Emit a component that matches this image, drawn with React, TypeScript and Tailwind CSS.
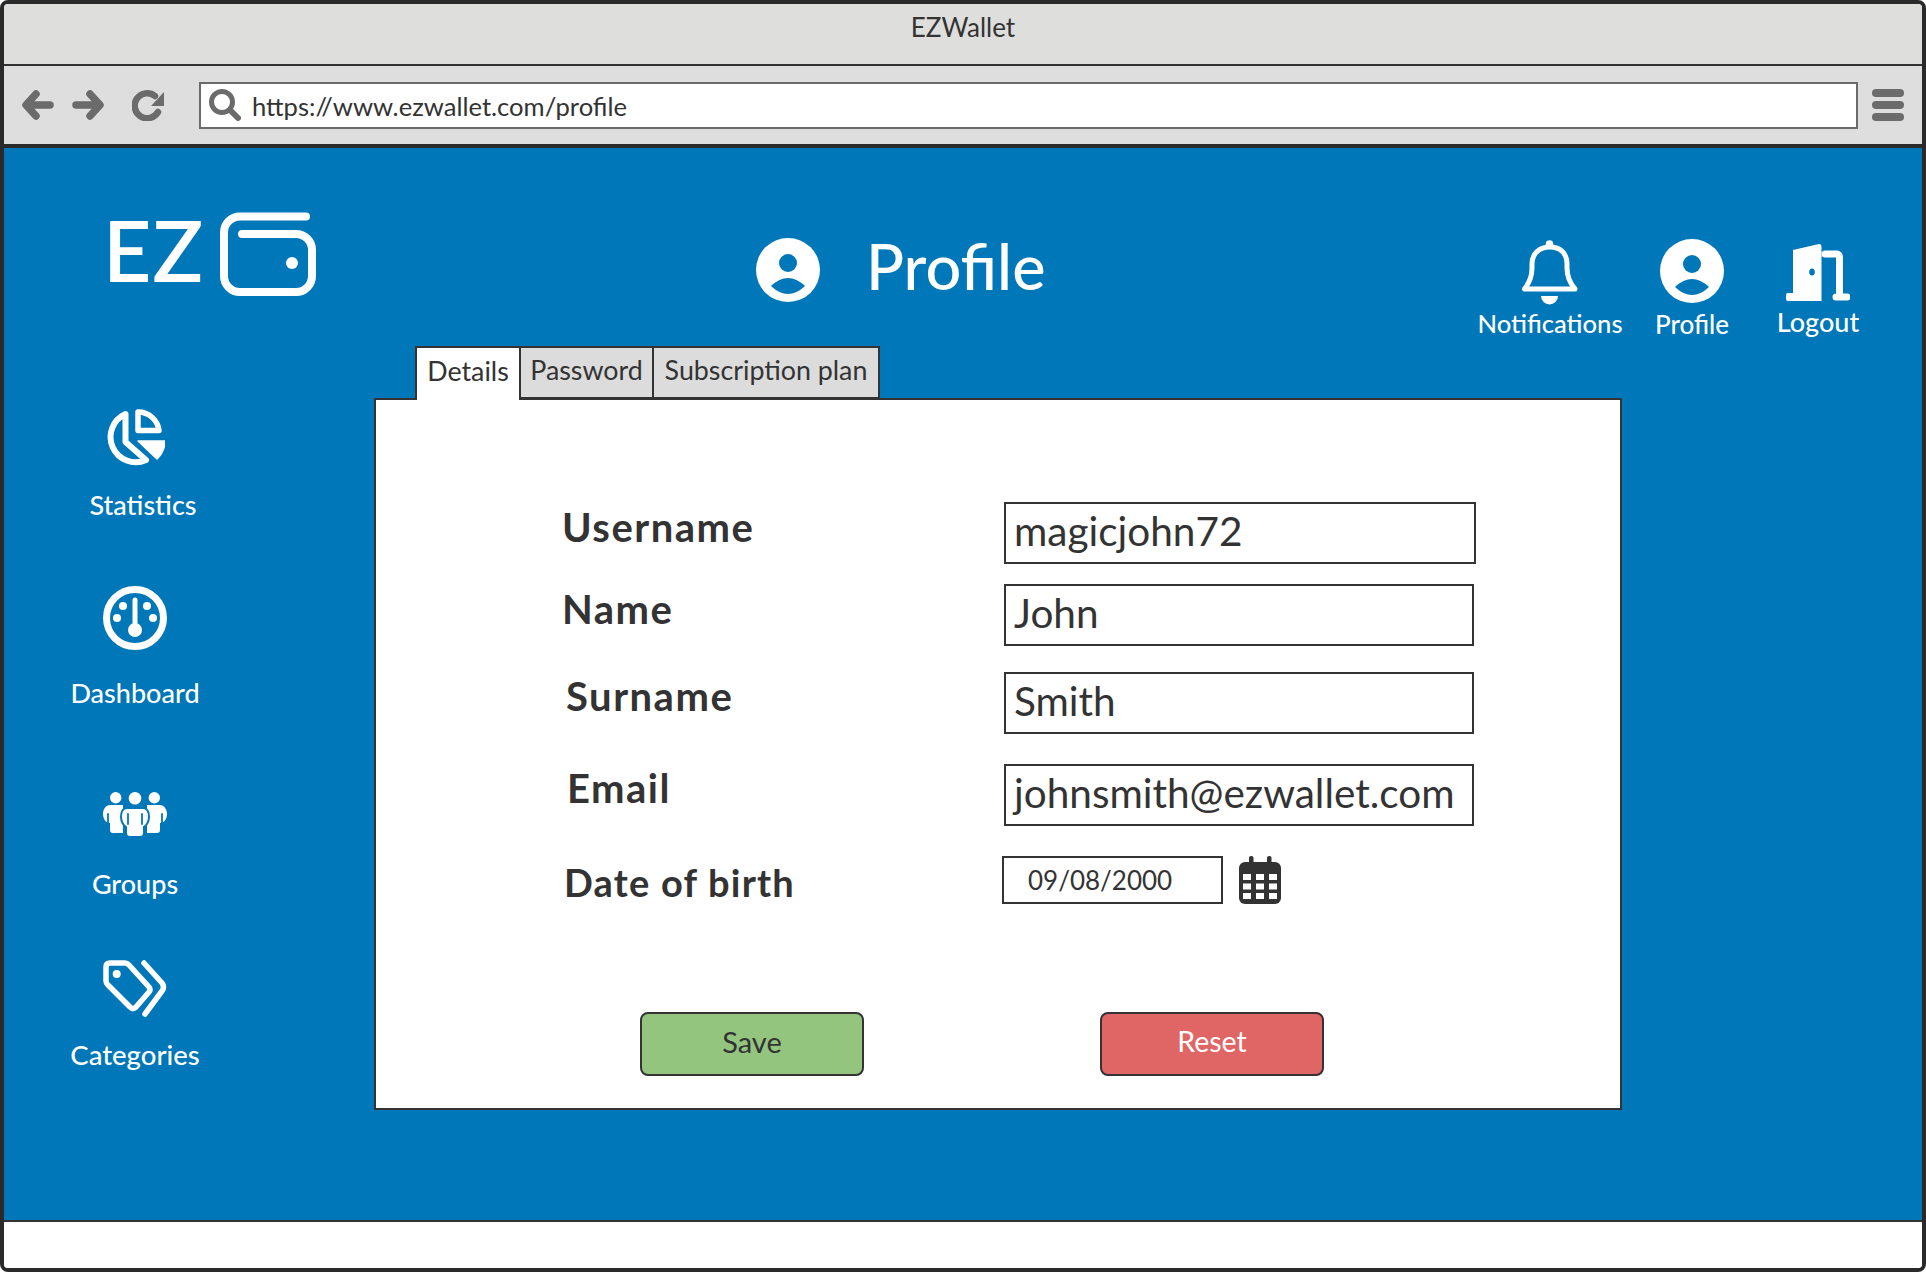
const BLUE = "#0077b8";

function ProfileIcon() {
  return (
    <svg width="64" height="64" viewBox="0 0 64 64" className="block">
      <circle cx="32" cy="32" r="32" fill="#fff" />
      <circle cx="32" cy="25" r="9" fill={BLUE} />
      <path d="M15 48 Q32 32 49 48 Q32 64 15 48Z" fill={BLUE} />
    </svg>
  );
}

function Bell() {
  return (
    <svg width="56" height="65" viewBox="0 0 56 65" className="block">
      <path d="M2.5 49 H53 C47 42 45 36 45 28 V24 C45 13 38 7 28 7 C18 7 10 13 10 24 V28 C10 36 8 42 2.5 49Z" fill="none" stroke="#fff" strokeWidth="5" strokeLinejoin="round" />
      <circle cx="27.5" cy="4" r="3.8" fill="#fff" />
      <path d="M19 56 H36 A8.5 8.5 0 0 1 19 56Z" fill="#fff" />
    </svg>
  );
}

function Door() {
  return (
    <svg width="64" height="57" viewBox="0 0 64 57" className="block">
      <path d="M7 6 L33 0 Q35.5 0 35.5 3 V57 H2 Q0 57 0 55 V51 Q0 49 2 49 H7Z" fill="#fff" />
      <ellipse cx="26" cy="28" rx="2.8" ry="3.5" fill={BLUE} />
      <path d="M39 10 H50 Q53.5 10 53.5 14 V53 M50 53 H61" fill="none" stroke="#fff" strokeWidth="7" strokeLinecap="round" />
    </svg>
  );
}

function Wallet() {
  return (
    <svg width="96" height="84" viewBox="0 0 96 84" className="block">
      <path d="M86 4.5 H20 A16 16 0 0 0 4 20.5 V64 A16 16 0 0 0 20 80 H76 A16 16 0 0 0 92 64 V38 A16 16 0 0 0 76 22 H22" fill="none" stroke="#fff" strokeWidth="8" strokeLinecap="round" />
      <circle cx="72" cy="51" r="6" fill="#fff" />
    </svg>
  );
}

function PieIcon() {
  return (
    <svg width="60" height="58" viewBox="0 0 60 58" className="block">
      <path d="M20.5 5 V33 L41 51 A25 25 0 1 1 20.5 5Z" fill="none" stroke="#fff" strokeWidth="6" strokeLinejoin="round" />
      <path d="M33 3 V21.5 H54 A21 21 0 0 0 33 3Z" fill="none" stroke="#fff" strokeWidth="5.5" strokeLinejoin="round" />
      <path d="M33 32 H60 Q60 42 52 50Z" fill="#fff" stroke="#fff" strokeWidth="1.5" strokeLinejoin="round" />
    </svg>
  );
}

function Gauge() {
  return (
    <svg width="64" height="64" viewBox="0 0 64 64" className="block">
      <circle cx="32" cy="32" r="28.5" fill="none" stroke="#fff" strokeWidth="7" />
      <path d="M32 14 V44" stroke="#fff" strokeWidth="5" strokeLinecap="round" />
      <circle cx="32" cy="44" r="7" fill="#fff" />
      <circle cx="20" cy="20" r="4" fill="#fff" />
      <circle cx="44" cy="20" r="4" fill="#fff" />
      <circle cx="14" cy="32" r="4" fill="#fff" />
      <circle cx="50" cy="32" r="4" fill="#fff" />
    </svg>
  );
}

function GroupIcon() {
  const side = "M7 13 H20 V41 H10 Q7 41 7 38 V31 C3 31 0 27 0 22 C0 17 3 13 7 13Z";
  return (
    <svg width="64" height="46" viewBox="0 0 64 46" className="block">
      <circle cx="12.7" cy="5.7" r="5.7" fill="#fff" />
      <circle cx="32" cy="6.3" r="6.3" fill="#fff" />
      <circle cx="51.3" cy="5.7" r="5.7" fill="#fff" />
      <path d={side} fill="#fff" />
      <path d={side} fill="#fff" transform="translate(64 0) scale(-1 1)" />
      <path d="M24 16 H40 C44 16 46 20 46 25 C46 30 43 34 41 35 V41 Q41 45 37 45 H27 Q23 45 23 41 V35 C21 34 18 30 18 25 C18 20 20 16 24 16Z" fill="#fff" stroke={BLUE} strokeWidth="2" />
      <path d="M5 22 V32 M25 22 V32 M39 22 V32 M59 22 V32" stroke={BLUE} strokeWidth="1.8" strokeLinecap="round" />
    </svg>
  );
}

function TagIcon() {
  return (
    <svg width="64" height="57" viewBox="0 0 64 57" className="block">
      <path d="M7 3 H22 Q24 3 26 5 L46 27 Q48 30 46 32 L33 47 Q30 50 27 47 L5 25 Q3 23 3 21 V7 Q3 3 7 3Z" fill="none" stroke="#fff" strokeWidth="5.5" strokeLinejoin="round" />
      <circle cx="13.7" cy="14" r="4" fill="#fff" />
      <path d="M41 3 L59 23 Q62 27 59 31 L42 54" fill="none" stroke="#fff" strokeWidth="5.5" strokeLinecap="round" strokeLinejoin="round" />
    </svg>
  );
}

function CalendarIcon() {
  const rows = [18, 27.5, 37];
  const cols = [4, 17, 30];
  return (
    <svg width="42" height="48" viewBox="0 0 42 48" className="block">
      <rect x="0" y="6" width="42" height="42" rx="6" fill="#333" />
      <rect x="10" y="0" width="4.5" height="10" rx="2" fill="#333" />
      <rect x="28" y="0" width="4.5" height="10" rx="2" fill="#333" />
      {rows.map((y) => cols.map((x) => <rect key={`${x}-${y}`} x={x} y={y} width="8" height="6" fill="#fff" />))}
    </svg>
  );
}

function Back() {
  return (
    <svg width="33" height="32" viewBox="0 0 33 32" className="block">
      <path d="M29 16 H6 M15 5 L5 16 L15 27" fill="none" stroke="#6b6b6b" strokeWidth="7.5" strokeLinecap="round" strokeLinejoin="round" />
    </svg>
  );
}

function Forward() {
  return (
    <svg width="33" height="32" viewBox="0 0 33 32" className="block">
      <path d="M4 16 H27 M18 5 L28 16 L18 27" fill="none" stroke="#6b6b6b" strokeWidth="7.5" strokeLinecap="round" strokeLinejoin="round" />
    </svg>
  );
}

function Reload() {
  return (
    <svg width="32" height="32" viewBox="0 0 32 32" className="block">
      <path d="M23 7 A12.5 12.5 0 1 0 26 23" fill="none" stroke="#6b6b6b" strokeWidth="6.5" strokeLinecap="round" />
      <path d="M32 3 V17 H19Z" fill="#6b6b6b" />
    </svg>
  );
}

function Search() {
  return (
    <svg width="32" height="32" viewBox="0 0 32 32" className="block">
      <circle cx="13" cy="13" r="10.5" fill="none" stroke="#6b6b6b" strokeWidth="5" />
      <path d="M21 21 L29 29" stroke="#6b6b6b" strokeWidth="6" strokeLinecap="round" />
    </svg>
  );
}

function Label({ text, className }: { text: string; className: string }) {
  return <span className={`h-[30px] whitespace-nowrap font-medium leading-[30px] text-white ${className}`}>{text}</span>;
}

const rows = [
  { label: "Username", text: "magicjohn72", row: "mt-0 h-[62px]", lab: "ml-[186px] w-[442px] -mt-[13px]", box: "w-[472px] h-[62px]" },
  { label: "Name", text: "John", row: "mt-[20px] h-[62px]", lab: "ml-[186px] w-[442px] -mt-[13px]", box: "w-[470px] h-[62px]" },
  { label: "Surname", text: "Smith", row: "mt-[26px] h-[62px]", lab: "ml-[190px] w-[438px] -mt-[15px]", box: "w-[470px] h-[62px]" },
  { label: "Email", text: "johnsmith@ezwallet.com", row: "mt-[30px] h-[62px]", lab: "ml-[191px] w-[437px] -mt-[14px]", box: "w-[470px] h-[62px]" },
];

export default function App() {
  return (
    <div className="flex h-[1272px] w-[1926px] flex-col overflow-hidden rounded-[8px] border-4 border-[#2a2a2a] bg-white text-[#333] [font-family:Lato,sans-serif]">
      <div className="flex h-[62px] items-center justify-center border-b-2 border-[#333] bg-[#dededc] pb-[13px] text-[26px]">EZWallet</div>
      <div className="flex h-[82px] items-center border-b-4 border-[#2a2a2a] bg-[#dedede]">
        <div className="ml-[17px]"><Back /></div>
        <div className="ml-[18px]"><Forward /></div>
        <div className="ml-[27px]"><Reload /></div>
        <div className="ml-[35px] flex h-[47px] w-[1659px] items-center border-2 border-[#6b6b6b] bg-white pl-[8px]">
          <Search />
          <span className="ml-[11px] pt-[3px] text-[25.6px] leading-none">https://www.ezwallet.com/profile</span>
        </div>
        <div className="ml-[14px] flex flex-col gap-[4px]">
          <div className="h-[8px] w-[32px] rounded-full bg-[#6b6b6b]" />
          <div className="h-[8px] w-[32px] rounded-full bg-[#6b6b6b]" />
          <div className="h-[8px] w-[32px] rounded-full bg-[#6b6b6b]" />
        </div>
      </div>

      <div className="flex h-[1074px] border-b-2 border-[#333] bg-[#0077b8]">
        <aside className="w-[370px] shrink-0">
          <div className="ml-[99px] mt-[64px] flex h-[84px] items-start">
            <span className="-mt-[7px] w-[117px] text-[84px] font-semibold leading-[90px] tracking-[1px] text-white">EZ</span>
            <Wallet />
          </div>
          <div className="ml-[51px] mt-[113px] flex w-[160px] flex-col items-center">
            <div className="pr-[1px]"><PieIcon /></div>
            <Label text="Statistics" className="mt-[23px] ml-[16px] text-[27px]" />
          </div>
          <div className="ml-[51px] mt-[66px] flex w-[160px] flex-col items-center">
            <Gauge />
            <Label text="Dashboard" className="mt-[28px] text-[27px]" />
          </div>
          <div className="ml-[51px] mt-[84px] flex w-[160px] flex-col items-center">
            <GroupIcon />
            <Label text="Groups" className="mt-[31px] text-[27px]" />
          </div>
          <div className="ml-[51px] mt-[61px] flex w-[160px] flex-col items-center">
            <TagIcon />
            <Label text="Categories" className="mt-[23px] text-[27.5px]" />
          </div>
        </aside>

        <main className="flex-1">
          <header className="flex h-[198px] items-start">
            <div className="ml-[382px] mt-[90px]"><ProfileIcon /></div>
            <h1 className="ml-[46px] mt-[86px] text-[63px] font-medium leading-[64px] text-white">Profile</h1>
            <div className="ml-auto mr-[64px] flex items-start">
              <div className="mt-[92px] flex w-[160px] flex-col items-center">
                <Bell />
                <Label text="Notifications" className="mt-[3px] text-[25.6px]" />
              </div>
              <div className="ml-[22px] mt-[91px] flex w-[80px] flex-col items-center">
                <ProfileIcon />
                <Label text="Profile" className="mt-[6px] text-[26px]" />
              </div>
              <div className="ml-[46px] mt-[96px] flex w-[80px] flex-col items-center">
                <Door />
                <Label text="Logout" className="mt-[6px] text-[27px]" />
              </div>
            </div>
          </header>

          <div className="relative z-10 ml-[41px] -mb-[2px] flex h-[54px] text-[26.8px]">
            <div className="flex w-[106px] items-center justify-center border-2 border-b-0 border-[#333] bg-white pb-[6px]">Details</div>
            <div className="-ml-[2px] flex h-[53px] w-[135px] items-center justify-center border-2 border-[#333] bg-[#dcdcdc] pb-[4px]">Password</div>
            <div className="-ml-[2px] flex h-[53px] w-[228px] items-center justify-center border-2 border-[#333] bg-[#dcdcdc] pb-[4px]">Subscription plan</div>
          </div>

          <section className="h-[712px] w-[1248px] border-2 border-[#333] bg-white pt-[102px]">
            {rows.map((r) => (
              <div key={r.label} className={`flex items-center ${r.row}`}>
                <span className={`text-[40px] font-bold leading-[44px] tracking-[1.5px] ${r.lab}`}>{r.label}</span>
                <div className={`flex items-center border-2 border-[#333] pb-[3px] pl-[8px] text-[40.5px] leading-none ${r.box}`}>{r.text}</div>
              </div>
            ))}
            <div className="mt-[30px] flex h-[48px] items-center">
              <span className="ml-[188px] mt-[4px] w-[438px] text-[38px] font-bold leading-[44px] tracking-[1.2px]">Date of birth</span>
              <div className="flex h-[48px] w-[221px] items-center border-2 border-[#333] pl-[24px] text-[26px] leading-none">09/08/2000</div>
              <div className="ml-[16px]"><CalendarIcon /></div>
            </div>
            <div className="ml-[264px] mt-[108px] flex gap-[236px]">
              <div className="flex h-[64px] w-[224px] items-center justify-center rounded-[8px] border-2 border-[#333] bg-[#94c57f] pb-[5px] text-[29px]">Save</div>
              <div className="flex h-[64px] w-[224px] items-center justify-center rounded-[8px] border-2 border-[#333] bg-[#e06666] pb-[5px] text-[28.5px] text-white">Reset</div>
            </div>
          </section>
        </main>
      </div>
      <div className="flex-1 bg-white" />
    </div>
  );
}
